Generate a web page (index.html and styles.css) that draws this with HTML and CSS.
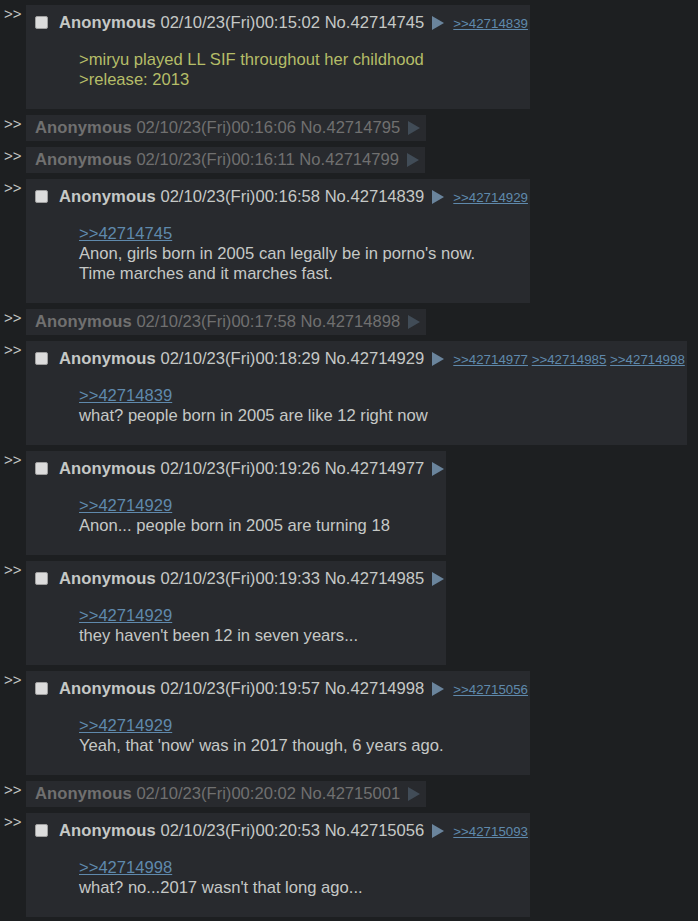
FILE: index.html
```html
<!DOCTYPE html>
<html lang="en">
<head>
    <meta charset="UTF-8">
    <title>/jp/ - Thread</title>
    <link rel="stylesheet" href="styles.css">
</head>
<body>

<div class="thread">

    <div class="reply-row">
        <div class="side">&gt;&gt;</div>
        <div class="post">
            <div class="post-head">
                <span class="check"></span><span class="name">Anonymous</span> <span class="date">02/10/23(Fri)00:15:02</span> <span class="num">No.42714745</span><span class="menu-btn"><svg width="12" height="14" viewBox="0 0 12 14"><polygon points="0,0 12,7 0,14"/></svg></span><span class="backlinks"><a href="#p42714839">&gt;&gt;42714839</a></span>
            </div>
            <blockquote>
                <span class="quote">&gt;miryu played LL SIF throughout her childhood</span><br>
                <span class="quote">&gt;release: 2013</span>
            </blockquote>
        </div>
    </div>

    <div class="reply-row">
        <div class="side">&gt;&gt;</div>
        <div class="stub">
            <span class="name">Anonymous</span> 02/10/23(Fri)00:16:06 No.42714795<span class="menu-btn"><svg width="12" height="14" viewBox="0 0 12 14"><polygon points="0,0 12,7 0,14"/></svg></span>
        </div>
    </div>

    <div class="reply-row">
        <div class="side">&gt;&gt;</div>
        <div class="stub">
            <span class="name">Anonymous</span> 02/10/23(Fri)00:16:11 No.42714799<span class="menu-btn"><svg width="12" height="14" viewBox="0 0 12 14"><polygon points="0,0 12,7 0,14"/></svg></span>
        </div>
    </div>

    <div class="reply-row">
        <div class="side">&gt;&gt;</div>
        <div class="post">
            <div class="post-head">
                <span class="check"></span><span class="name">Anonymous</span> <span class="date">02/10/23(Fri)00:16:58</span> <span class="num">No.42714839</span><span class="menu-btn"><svg width="12" height="14" viewBox="0 0 12 14"><polygon points="0,0 12,7 0,14"/></svg></span><span class="backlinks"><a href="#p42714929">&gt;&gt;42714929</a></span>
            </div>
            <blockquote>
                <a class="quotelink" href="#p42714745">&gt;&gt;42714745</a><br>
                Anon, girls born in 2005 can legally be in porno's now.<br>
                Time marches and it marches fast.
            </blockquote>
        </div>
    </div>

    <div class="reply-row">
        <div class="side">&gt;&gt;</div>
        <div class="stub">
            <span class="name">Anonymous</span> 02/10/23(Fri)00:17:58 No.42714898<span class="menu-btn"><svg width="12" height="14" viewBox="0 0 12 14"><polygon points="0,0 12,7 0,14"/></svg></span>
        </div>
    </div>

    <div class="reply-row">
        <div class="side">&gt;&gt;</div>
        <div class="post">
            <div class="post-head">
                <span class="check"></span><span class="name">Anonymous</span> <span class="date">02/10/23(Fri)00:18:29</span> <span class="num">No.42714929</span><span class="menu-btn"><svg width="12" height="14" viewBox="0 0 12 14"><polygon points="0,0 12,7 0,14"/></svg></span><span class="backlinks"><a href="#p42714977">&gt;&gt;42714977</a> <a href="#p42714985">&gt;&gt;42714985</a> <a href="#p42714998">&gt;&gt;42714998</a></span>
            </div>
            <blockquote>
                <a class="quotelink" href="#p42714839">&gt;&gt;42714839</a><br>
                what? people born in 2005 are like 12 right now
            </blockquote>
        </div>
    </div>

    <div class="reply-row">
        <div class="side">&gt;&gt;</div>
        <div class="post">
            <div class="post-head">
                <span class="check"></span><span class="name">Anonymous</span> <span class="date">02/10/23(Fri)00:19:26</span> <span class="num">No.42714977</span><span class="menu-btn"><svg width="12" height="14" viewBox="0 0 12 14"><polygon points="0,0 12,7 0,14"/></svg></span>
            </div>
            <blockquote>
                <a class="quotelink" href="#p42714929">&gt;&gt;42714929</a><br>
                Anon... people born in 2005 are turning 18
            </blockquote>
        </div>
    </div>

    <div class="reply-row">
        <div class="side">&gt;&gt;</div>
        <div class="post">
            <div class="post-head">
                <span class="check"></span><span class="name">Anonymous</span> <span class="date">02/10/23(Fri)00:19:33</span> <span class="num">No.42714985</span><span class="menu-btn"><svg width="12" height="14" viewBox="0 0 12 14"><polygon points="0,0 12,7 0,14"/></svg></span>
            </div>
            <blockquote>
                <a class="quotelink" href="#p42714929">&gt;&gt;42714929</a><br>
                they haven't been 12 in seven years...
            </blockquote>
        </div>
    </div>

    <div class="reply-row">
        <div class="side">&gt;&gt;</div>
        <div class="post">
            <div class="post-head">
                <span class="check"></span><span class="name">Anonymous</span> <span class="date">02/10/23(Fri)00:19:57</span> <span class="num">No.42714998</span><span class="menu-btn"><svg width="12" height="14" viewBox="0 0 12 14"><polygon points="0,0 12,7 0,14"/></svg></span><span class="backlinks"><a href="#p42715056">&gt;&gt;42715056</a></span>
            </div>
            <blockquote>
                <a class="quotelink" href="#p42714929">&gt;&gt;42714929</a><br>
                Yeah, that 'now' was in 2017 though, 6 years ago.
            </blockquote>
        </div>
    </div>

    <div class="reply-row">
        <div class="side">&gt;&gt;</div>
        <div class="stub">
            <span class="name">Anonymous</span> 02/10/23(Fri)00:20:02 No.42715001<span class="menu-btn"><svg width="12" height="14" viewBox="0 0 12 14"><polygon points="0,0 12,7 0,14"/></svg></span>
        </div>
    </div>

    <div class="reply-row">
        <div class="side">&gt;&gt;</div>
        <div class="post">
            <div class="post-head">
                <span class="check"></span><span class="name">Anonymous</span> <span class="date">02/10/23(Fri)00:20:53</span> <span class="num">No.42715056</span><span class="menu-btn"><svg width="12" height="14" viewBox="0 0 12 14"><polygon points="0,0 12,7 0,14"/></svg></span><span class="backlinks"><a href="#p42715093">&gt;&gt;42715093</a></span>
            </div>
            <blockquote>
                <a class="quotelink" href="#p42714998">&gt;&gt;42714998</a><br>
                what? no...2017 wasn't that long ago...
            </blockquote>
        </div>
    </div>

</div>

</body>
</html>
```

FILE: styles.css
```css
/* Global */
* {
    box-sizing: border-box;
    margin: 0;
    padding: 0;
}
body {
    background-color: #1d1f21;
    color: #c5c8c6;
    font-family: 'Liberation Sans', Arial, sans-serif;
    font-size: 16.6px;
    overflow: hidden;
}
a {
    color: #5f89ac;
}

/* Thread */
.thread {
    display: flex;
    flex-direction: column;
    align-items: flex-start;
    gap: 6px;
    padding: 5px 0 0 4px;
}
.reply-row {
    display: flex;
    align-items: flex-start;
}
.side {
    width: 22px;
    font-size: 15px;
    line-height: 16px;
    margin-top: 1px;
    color: #c5c8c6;
}

/* Posts */
.post {
    background-color: #282a2e;
    padding: 8px 2px 19px 9px;
}
.post-head {
    white-space: nowrap;
    line-height: 20px;
    height: 20px;
}
.check {
    display: inline-block;
    vertical-align: -1px;
    width: 13px;
    height: 13px;
    margin-right: 11px;
    border-radius: 2px;
    background-color: #dcdcdc;
    border: 1px solid #a0a0a0;
}
.name {
    font-weight: 700;
    letter-spacing: 0.1px;
}
.menu-btn {
    display: inline-block;
    vertical-align: -2px;
    margin-left: 8px;
    line-height: 0;
}
.menu-btn svg {
    fill: #6a849c;
}
.backlinks {
    font-size: 13.3px;
    margin-left: 9px;
}
blockquote {
    margin: 17px 0 0 44px;
    line-height: 20px;
}
.quote {
    color: #b5bd68;
}
.quotelink {
    color: #5f89ac;
}

/* Hidden post stubs */
.stub {
    white-space: nowrap;
    background-color: #282a2e;
    color: #707070;
    line-height: 20px;
    padding: 3px 6px 3px 9px;
}
.stub .menu-btn svg {
    fill: #414c57;
}
```
